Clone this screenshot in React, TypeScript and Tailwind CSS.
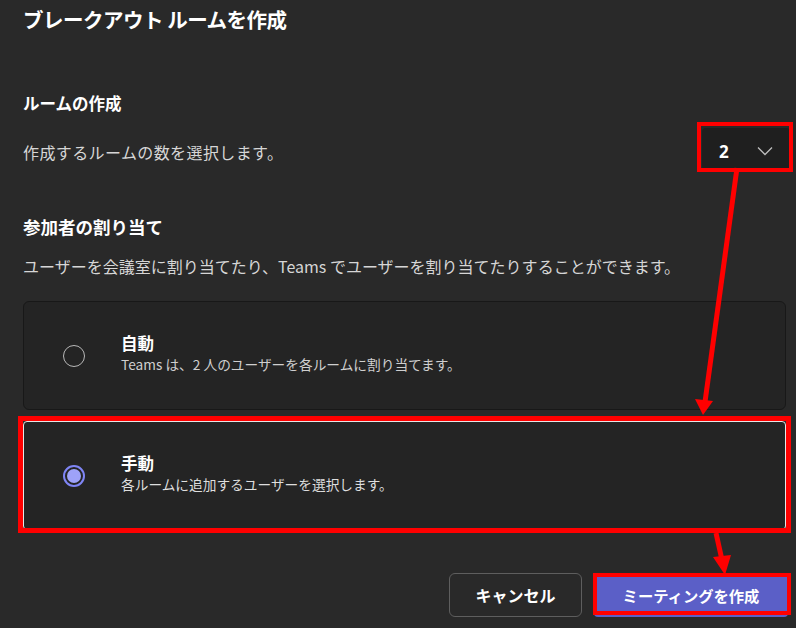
import React from "react";

const font = {
  fontFamily: '"Noto Sans CJK JP", "Noto Sans", sans-serif',
};

function Radio({ checked }: { checked: boolean }) {
  if (checked) {
    return (
      <div className="w-[22px] h-[22px] rounded-full border-[2px] border-[#7f85f5] flex items-center justify-center shrink-0">
        <div className="w-[14px] h-[14px] rounded-full bg-[#9ea2f8]" />
      </div>
    );
  }
  return <div className="w-[22px] h-[22px] rounded-full border-[1.5px] border-[#b8b8b8] shrink-0" />;
}

export default function App() {
  return (
    <div
      className="relative w-[796px] h-[628px] bg-[#292929] overflow-hidden text-white"
      style={font}
    >
      <div className="pl-[23px] pr-[6px] pt-[5px]">
        <h1 className="text-[20.5px] leading-[28px] font-bold tracking-[-0.5px]">
          ブレークアウト ルームを作成
        </h1>

        <h2 className="mt-[58px] text-[16.5px] leading-[24px] font-bold">ルームの作成</h2>

        <div className="mt-[13px] flex items-center justify-between h-[42px]">
          <p className="text-[16px] leading-[24px] text-[#d6d6d6] pt-[5px] tracking-[0.4px]">
            作成するルームの数を選択します。
          </p>
          <div className="relative">
            <div className="w-[88px] h-[42px] bg-[#1f1f1f] rounded-[4px] flex items-center pl-[17px] pr-[17px] pt-[4px]">
              <span className="text-[17px] font-bold leading-none" style={{ fontFamily: '"Open Sans", "Noto Sans", sans-serif' }}>2</span>
              <svg className="ml-auto" width="16" height="10" viewBox="0 0 16 10" fill="none">
                <path d="M1 1.5 L8 8.5 L15 1.5" stroke="#bdbdbd" strokeWidth="1.3" />
              </svg>
            </div>
            <span className="absolute -left-[5px] -top-[6px] -right-[3px] -bottom-[2px] border-[4px] border-[#ff0000] pointer-events-none" />
          </div>
        </div>

        <h2 className="mt-[45px] text-[17.5px] leading-[24px] font-bold">参加者の割り当て</h2>
        <p className="mt-[15px] text-[16px] leading-[24px] text-[#d6d6d6]">
          ユーザーを会議室に割り当てたり、Teams でユーザーを割り当てたりすることができます。
        </p>

        <div className="mr-[4px]">
          <div className="mt-[23px] h-[109px] rounded-[6px] bg-[#242424] border border-[#181818] flex items-center pl-[39px]">
            <Radio checked={false} />
            <div className="ml-[36px] -mt-[5px]">
              <div className="text-[16.5px] leading-[22px] font-bold">自動</div>
              <div className="text-[13.7px] leading-[20px] text-[#cfcfcf]">
                Teams は、2 人のユーザーを各ルームに割り当てます。
              </div>
            </div>
          </div>

          <div className="relative mt-[11px]">
            <div className="h-[109px] rounded-[4px] bg-[#242424] border border-[#e6e6e6] flex items-center pl-[39px]">
              <Radio checked />
              <div className="ml-[36px] -mt-[6px]">
                <div className="text-[16.5px] leading-[22px] font-bold">手動</div>
                <div className="text-[13.7px] leading-[20px] text-[#dedede]">
                  各ルームに追加するユーザーを選択します。
                </div>
              </div>
            </div>
            <span className="absolute -left-[5px] -top-[5px] -right-[5px] -bottom-[3px] border-[5px] border-[#ff0000] pointer-events-none" />
          </div>
        </div>

        <div className="mt-[43px] flex justify-end gap-[12px] pr-[2px]">
          <button className="w-[133px] h-[44px] rounded-[6px] border border-[#5e5e5e] bg-[#292929] text-[16px] font-bold text-white">
            キャンセル
          </button>
          <div className="relative">
            <button className="w-[194px] h-[44px] rounded-[4px] bg-[#5b5fc7] text-[15.3px] font-bold text-white">
              ミーティングを作成
            </button>
            <span className="absolute -left-[1px] top-0 -right-[3px] bottom-[2px] border-[4px] border-[#ff0000] pointer-events-none" />
          </div>
        </div>
      </div>

      <svg
        className="absolute inset-0 pointer-events-none"
        width="796"
        height="628"
        viewBox="0 0 796 628"
      >
        <line x1="737" y1="168" x2="705" y2="402" stroke="#ff0000" strokeWidth="5" />
        <polygon points="695,399 713,401 703,415" fill="#ff0000" />
        <line x1="716" y1="533" x2="722" y2="560" stroke="#ff0000" strokeWidth="5" />
        <polygon points="713,557 731,555 725,575" fill="#ff0000" />
      </svg>
    </div>
  );
}
